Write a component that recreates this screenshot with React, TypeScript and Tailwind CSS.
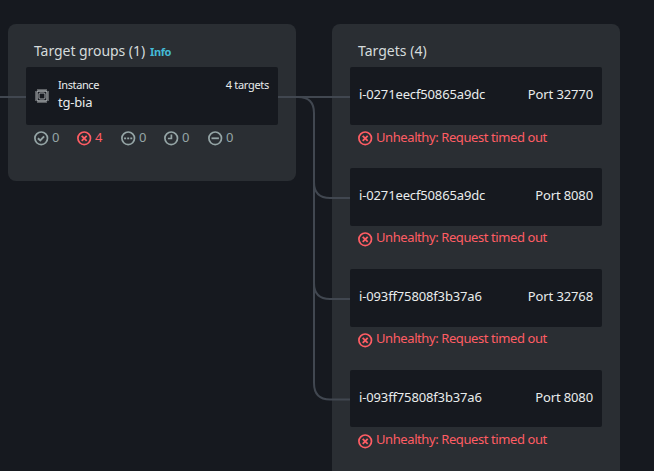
import React from "react";

type IconKind = "check" | "cross" | "dots" | "clock" | "minus";

const glyphs: Record<IconKind, React.ReactNode> = {
  check: <path d="M4.2 7.4 6.6 9.6 10.4 5.6" strokeWidth="1.9" />,
  cross: <path d="M5 5 10 10M10 5 5 10" strokeWidth="1.8" />,
  dots: <path d="M3.4 7.5h2M6.5 7.5h2M9.6 7.5h2" strokeWidth="1.8" />,
  clock: <path d="M7.7 3.8V7.7H4.2" strokeWidth="1.7" />,
  minus: <path d="M3.8 7.5h7.4" strokeWidth="1.8" />,
};

function StatusIcon({ kind, className = "" }: { kind: IconKind; className?: string }) {
  return (
    <svg viewBox="0 0 15 15" className={`h-[15px] w-[15px] shrink-0 ${className}`} fill="none" stroke="currentColor">
      <circle cx="7.2" cy="7.3" r="6.3" strokeWidth="1.7" />
      <g transform="translate(-.3 -.2)">{glyphs[kind]}</g>
    </svg>
  );
}

function ChipIcon() {
  return (
    <svg viewBox="0 0 14 14" className="h-[14px] w-[14px] shrink-0" fill="none" stroke="#a6aaad">
      <path d="M2.5 .5h9M2.5 13.5h9M.5 2.5v9M13.5 2.5v9" strokeDasharray="1 1" />
      <rect x="2" y="2" width="10" height="10" rx="1" strokeWidth="1.3" />
      <rect x="4" y="4" width="6" height="6" rx="1" strokeWidth="1" />
    </svg>
  );
}

const counts: { kind: IconKind; value: number; width: string }[] = [
  { kind: "check", value: 0, width: "w-[43px] text-[#95a5a6]" },
  { kind: "cross", value: 4, width: "w-[44px] text-[#ff5d64]" },
  { kind: "dots", value: 0, width: "w-[43px] text-[#95a5a6]" },
  { kind: "clock", value: 0, width: "w-[44px] text-[#95a5a6]" },
  { kind: "minus", value: 0, width: "w-[43px] text-[#95a5a6]" },
];

const targets = [
  { id: "i-0271eecf50865a9dc", port: "Port 32770", card: "h-[58px]", text: "", icon: "mt-0.5" },
  { id: "i-0271eecf50865a9dc", port: "Port 8080", card: "h-[58px]", text: "-mt-px", icon: "mt-0.5" },
  { id: "i-093ff75808f3b37a6", port: "Port 32768", card: "h-[58px]", text: "-mt-px", icon: "mt-0.5" },
  { id: "i-093ff75808f3b37a6", port: "Port 8080", card: "h-[57px]", text: "", icon: "mt-[3px]" },
];

function Connectors() {
  return (
    <svg className="pointer-events-none absolute inset-0 h-[471px] w-[654px]" viewBox="0 0 654 471" fill="none" stroke="#414750" strokeWidth="2">
      <path d="M0 97H26M278 97H350" />
      <path d="M298 97Q314 97 314 113V383Q314 399.5 330 399.5H350" />
      <path d="M314 182Q314 198 330 198H350" />
      <path d="M314 283Q314 299 330 299H350" />
    </svg>
  );
}

export default function App() {
  return (
    <div className="relative flex h-[471px] w-[654px] items-start gap-9 overflow-hidden bg-[#16191f] pt-6 pl-2 font-['Noto_Sans','Open_Sans',sans-serif] text-[#d5dbdb]">
      <section className="h-[157px] w-[288px] shrink-0 rounded-lg bg-[#2a2e33] px-[18px]">
        <header className="flex h-[43px] items-baseline gap-[5px] pt-[17px] pl-2 leading-5">
          <h2 className="text-[14px] tracking-[-0.05px] whitespace-nowrap">Target groups (1)</h2>
          <a className="text-[11px] font-bold tracking-[-0.4px] text-[#44b9d6]">Info</a>
        </header>
        <div className="flex h-[58px] items-start rounded-[2px] bg-[#16191f] px-[9px] text-[#e9ecec]">
          <div className="pt-[22px]">
            <ChipIcon />
          </div>
          <div className="ml-[9px] flex-1 pt-[9px]">
            <div className="text-[11px] leading-[17px] tracking-[-0.4px]">Instance</div>
            <div className="pt-px text-[13px] leading-[17px] tracking-[-0.2px]">tg-bia</div>
          </div>
          <div className="pt-[9px] text-[11px] leading-[17px] tracking-[-0.3px]">4 targets</div>
        </div>
        <div className="flex pt-[5px] pl-2">
          {counts.map((c) => (
            <div key={c.kind} className={`flex items-start gap-[3px] text-[13px] leading-4 ${c.width}`}>
              <StatusIcon kind={c.kind} className="mt-px" />
              <span className="-mt-px">{c.value}</span>
            </div>
          ))}
        </div>
      </section>

      <section className="h-[470px] w-[288px] shrink-0 rounded-t-lg bg-[#2a2e33] px-[18px]">
        <h2 className="h-[43px] pt-[17px] pl-2 text-[14px] leading-5 tracking-[0.02px]">Targets (4)</h2>
        {targets.map((t) => (
          <div key={t.port + t.id} className="h-[101px]">
            <div className={`flex items-start justify-between rounded-[2px] bg-[#16191f] px-[9px] pt-[18px] text-[13px] leading-[18px] text-[#e9ecec] ${t.card}`}>
              <span className="tracking-[-0.14px]">{t.id}</span>
              <span className="tracking-[-0.12px]">{t.port}</span>
            </div>
            <div className="flex items-start gap-[3px] pt-1 pl-2 text-[13px] leading-[17px] tracking-[-0.41px] text-[#ff5d64]">
              <StatusIcon kind="cross" className={t.icon} />
              <span className={t.text}>Unhealthy: Request timed out</span>
            </div>
          </div>
        ))}
      </section>
      <Connectors />
    </div>
  );
}
